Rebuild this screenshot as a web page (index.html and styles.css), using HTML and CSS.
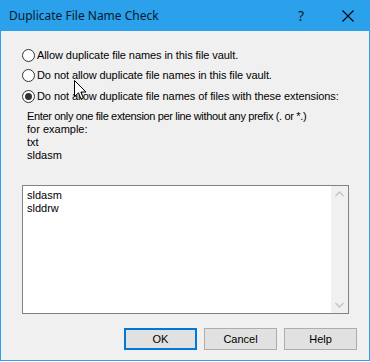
FILE: index.html
```html
<!DOCTYPE html>
<html>
<head>
<meta charset="utf-8">
<link rel="stylesheet" href="styles.css">
</head>
<body>
<div class="window">
  <div class="titlebar">
    <span class="title">Duplicate File Name Check</span>
    <span class="help-btn">?</span>
    <span class="close-btn">
      <svg width="12" height="12" viewBox="0 0 12 12"><path d="M0.5 0.5 L11.5 11.5 M11.5 0.5 L0.5 11.5" stroke="#000" stroke-width="1.1" fill="none"/></svg>
    </span>
  </div>
  <div class="content">
    <div class="radios">
      <label class="radio"><span class="circle"></span><span>Allow duplicate file names in this file vault.</span></label>
      <label class="radio"><span class="circle"></span><span>Do not allow duplicate file names in this file vault.</span></label>
      <label class="radio third"><span class="circle checked"></span><span>Do not allow duplicate file names of files with these extensions:</span></label>
    </div>
    <div class="info">
      <div class="info-first">Enter only one file extension per line without any prefix (. or *.)</div>
      <div>for example:</div>
      <div>txt</div>
      <div>sldasm</div>
    </div>
    <div class="textbox">
      <div class="text-lines">
        <div>sldasm</div>
        <div>slddrw</div>
      </div>
      <div class="scrollbar">
        <svg width="9" height="6" viewBox="0 0 9 6"><path d="M0.5 5 L4.5 1 L8.5 5" stroke="#c4c4c4" stroke-width="1.3" fill="none"/></svg>
        <svg width="9" height="6" viewBox="0 0 9 6"><path d="M0.5 1 L4.5 5 L8.5 1" stroke="#c4c4c4" stroke-width="1.3" fill="none"/></svg>
      </div>
    </div>
    <div class="buttons">
      <button class="btn default">OK</button>
      <button class="btn">Cancel</button>
      <button class="btn">Help</button>
    </div>
  </div>
  <svg class="cursor" width="13" height="21" viewBox="0 0 13 21"><path d="M0.5 0.5 L0.5 16.5 L4.5 12.8 L7 19 L9.3 18 L6.9 12 L12 12 Z" fill="#fff" stroke="#000" stroke-width="1" stroke-linejoin="miter"/></svg>
</div>
</body>
</html>
```

FILE: styles.css
```css
* { box-sizing: border-box; }
html, body { margin: 0; padding: 0; background: #fff; }
body { font-family: "Liberation Sans", Arial, sans-serif; font-size: 11px; color: #000; }

.window {
  position: relative;
  width: 370px;
  height: 361px;
  background: #f0f0f0;
  border: 1px solid #2ba1ec;
  border-top: none;
  display: flex;
  flex-direction: column;
}

.titlebar {
  height: 31px;
  background: #2ba1ec;
  display: flex;
  align-items: center;
  padding-left: 8px;
  flex-shrink: 0;
}
.title {
  font-family: "Noto Sans", "Open Sans", sans-serif;
  font-size: 12px;
  color: #0a1a2a;
  flex: 1;
  margin-top: -1px;
}
.help-btn {
  font-family: "Noto Sans", sans-serif;
  font-size: 14px;
  width: 52px;
  text-align: center;
  color: #0a1a2a;
}
.close-btn {
  width: 42px;
  height: 30px;
  display: flex;
  align-items: center;
  justify-content: center;
}

.content {
  flex: 1;
  display: flex;
  flex-direction: column;
  padding: 14px 12px 0 21px;
}

.radios { display: flex; flex-direction: column; letter-spacing: -0.08px; }
.radio {
  height: 20px;
  display: flex;
  align-items: center;
  gap: 2px;
}
.radio.third { margin-top: 1px; }
.circle {
  width: 13px;
  height: 13px;
  border-radius: 50%;
  border: 1px solid #333;
  background: #fff;
  position: relative;
  flex-shrink: 0;
}
.circle.checked::after {
  content: "";
  position: absolute;
  left: 2px;
  top: 2px;
  width: 7px;
  height: 7px;
  border-radius: 50%;
  background: #333;
}

.info {
  margin-top: 4px;
  padding-left: 5px;
  line-height: 13px;
}
.info-first { letter-spacing: -0.35px; }

.textbox {
  margin-top: 23px;
  width: 327px;
  height: 129px;
  border: 1px solid #828282;
  background: #fff;
  display: flex;
}
.text-lines {
  flex: 1;
  padding: 3px 4px;
  line-height: 13px;
}
.scrollbar {
  width: 17px;
  background: #f0f0f0;
  display: flex;
  flex-direction: column;
  justify-content: space-between;
  align-items: center;
  padding: 5px 0 5px;
}

.buttons {
  margin-top: 14px;
  display: flex;
  justify-content: flex-end;
  gap: 7px;
}
.btn {
  width: 73px;
  height: 22px;
  background: #e1e1e1;
  border: 1px solid #adadad;
  font-family: "Liberation Sans", Arial, sans-serif;
  font-size: 11px;
  color: #000;
  padding: 0;
}
.btn.default {
  border: 2px solid #0078d7;
}

.cursor {
  position: absolute;
  left: 73px;
  top: 80px;
}
```
